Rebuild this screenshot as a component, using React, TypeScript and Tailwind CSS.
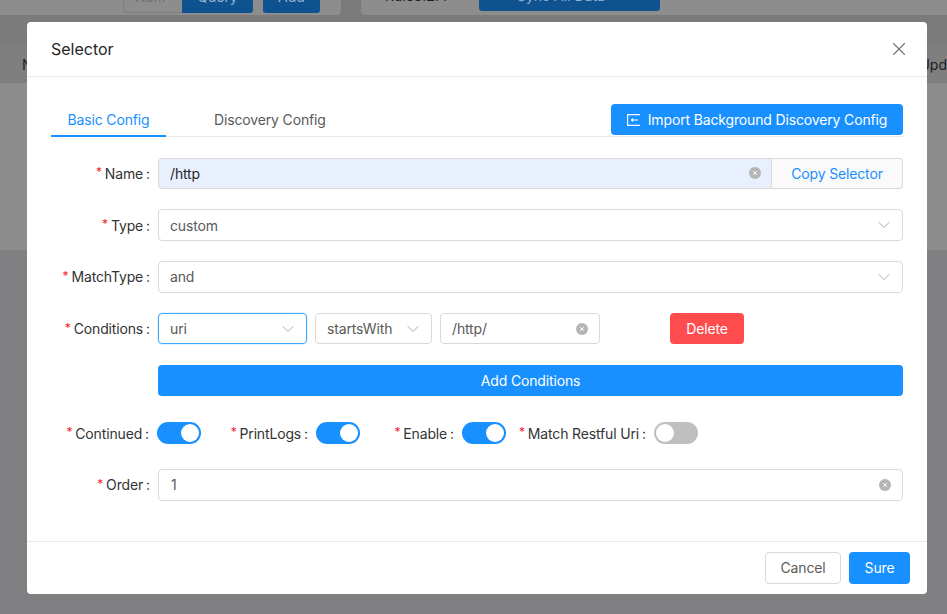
import React from "react";
import { X, ChevronDown } from "lucide-react";

const font = "font-['Inter','Liberation_Sans',sans-serif]";
const text = "text-[14px] tracking-[-0.15px]";

function Label({ text: t, className = "" }: { text: string; className?: string }) {
  return (
    <label className={"flex shrink-0 items-center justify-end whitespace-nowrap text-[14px] tracking-[-0.15px] text-[#333] " + className}>
      <span className="relative -top-[1px] mr-[3px] text-[12px] leading-none text-[#f5222d]">*</span>
      {t}
      <span className="ml-[3px] mr-[8px]">:</span>
    </label>
  );
}

function Clear() {
  return (
    <svg width="12" height="12" viewBox="0 0 12 12" className="shrink-0">
      <circle cx="6" cy="6" r="6" fill="#b5b5b5" />
      <path d="M4.2 4.2l3.6 3.6M7.8 4.2L4.2 7.8" stroke="#fff" strokeWidth="1" />
    </svg>
  );
}

function Select({ value, className = "", focus = false }: { value: string; className?: string; focus?: boolean }) {
  return (
    <div
      className={
        "flex h-[31.6px] items-center justify-between rounded-[4px] border bg-white pl-[11px] pr-[8px] text-[#595959] " +
        text +
        " " +
        (focus ? "border-[#40a9ff] shadow-[0_0_0_1px_rgba(24,144,255,0.12)] " : "border-[#d9d9d9] ") +
        className
      }
    >
      <span>{value}</span>
      <ChevronDown size={20} strokeWidth={1.1} className="text-[#a3a3a3]" />
    </div>
  );
}

function Switch({ on }: { on: boolean }) {
  return (
    <div className={"flex h-[22px] w-[44px] shrink-0 items-center rounded-full px-[2px] " + (on ? "justify-end bg-[#1890ff]" : "justify-start bg-[#bfbfbf]")}>
      <div className="h-[18px] w-[18px] rounded-full bg-white" />
    </div>
  );
}

export default function App() {
  return (
    <div className={"relative h-[614px] w-[947px] overflow-hidden bg-[#808082] " + font}>
      {/* page behind the overlay */}
      <div className="flex h-[15px] bg-[#7a7a7a]">
        <div className="flex w-[341px] items-start rounded-br-[4px] bg-[#8d8d8d] pl-[123px] text-[14px] leading-[20px]">
          <div className="h-[12.5px] w-[59px] overflow-hidden rounded-bl-[3px] border-b border-l border-[#7e7e7e] pl-[11px] text-[#6f6f6f]">
            <div className="-mt-[13px]">Na...</div>
          </div>
          <div className="h-[12.5px] w-[71px] overflow-hidden rounded-br-[3px] bg-[#0f5290] text-center text-[#8fb2d0]">
            <div className="-mt-[13px]">Query</div>
          </div>
          <div className="ml-[10px] h-[12.5px] w-[57px] overflow-hidden rounded-b-[3px] bg-[#0f5290] text-center text-[#8fb2d0]">
            <div className="-mt-[13px]">Add</div>
          </div>
        </div>
        <div className="ml-[20px] flex flex-1 items-start rounded-bl-[4px] bg-[#8d8d8d] pl-[24px] text-[14px] leading-[20px]">
          <div className="h-[12px] w-[94px] overflow-hidden text-[#1c1c1c]">
            <div className="-mt-[14px]">Rule3.2.4</div>
          </div>
          <div className="h-[10.5px] w-[181px] overflow-hidden rounded-b-[3px] bg-[#0f5290] pl-[38px] text-[#8fb2d0]">
            <div className="-mt-[14px]">Sync All Data</div>
          </div>
        </div>
      </div>
      <div className="h-[30px] bg-[#7b7b7c]" />
      <div className="flex h-[38px] items-center justify-between bg-[#7f7f80] px-[22px] text-[14px] text-[#222]">
        <span>N</span>
        <span className="-mr-[22px]">Upd</span>
      </div>
      <div className="h-[167px] bg-[#8d8d8d]" />

      {/* modal */}
      <div className="absolute left-[27px] top-[22px] flex h-[572px] w-[900px] flex-col rounded-[4px] bg-white">
        <div className="flex h-[55px] shrink-0 items-center justify-between border-b border-[#e8e8e8] pl-[24px] pr-[17px]">
          <h2 className="text-[16px] font-normal text-[#262626]">Selector</h2>
          <X size={22} strokeWidth={1.2} className="text-[#737373]" />
        </div>

        <div className="flex flex-1 flex-col px-[24px] pt-[27px]">
          <div className="flex h-[33px] items-start justify-between border-b border-[#e8e8e8]">
            <div className="flex">
              <div className={"h-[33px] w-[115px] border-b-2 border-[#1890ff] text-center leading-[31px] text-[#1890ff] " + text}>
                Basic Config
              </div>
              <div className={"ml-[32px] px-[16px] leading-[31px] text-[#595959] " + text}>Discovery Config</div>
            </div>
            <button className={"flex h-[31px] w-[292px] items-center justify-center gap-[8px] rounded-[4px] bg-[#1890ff] text-white " + text}>
              <svg width="13" height="12" viewBox="0 0 13 12" fill="none" stroke="#fff" strokeWidth="1.2">
                <path d="M13 .6H.6v10.8H13" />
                <path d="M11 6H4.5M6 4.5L4.5 6 6 7.5" />
              </svg>
              Import Background Discovery Config
            </button>
          </div>

          <div className="mt-[20.5px] flex flex-col gap-[20.2px]">
            <div className="flex items-center">
              <Label text="Name" className="w-[107px]" />
              <div className="flex h-[31.6px] flex-1">
                <div className={"flex flex-1 items-center justify-between rounded-l-[4px] border border-[#d9d9d9] bg-[#e8f0fe] pl-[11px] pr-[10px] text-[#262626] " + text}>
                  /http
                  <Clear />
                </div>
                <button className={"w-[131px] rounded-r-[4px] border border-l-0 border-[#d9d9d9] bg-[#fafafa] text-[#1890ff] " + text}>
                  Copy Selector
                </button>
              </div>
            </div>

            <div className="flex items-center">
              <Label text="Type" className="w-[107px]" />
              <Select value="custom" className="flex-1" />
            </div>

            <div className="flex items-center">
              <Label text="MatchType" className="w-[107px]" />
              <Select value="and" className="flex-1" />
            </div>

            <div className="flex items-center">
              <Label text="Conditions" className="w-[107px]" />
              <Select value="uri" focus className="w-[149px]" />
              <Select value="startsWith" className="ml-[8px] w-[117px]" />
              <div className={"ml-[8px] flex h-[31.6px] w-[160px] items-center justify-between rounded-[4px] border border-[#d9d9d9] pl-[11px] pr-[11px] text-[#595959] " + text}>
                /http/
                <Clear />
              </div>
              <button className={"ml-[70px] h-[31.6px] w-[74px] rounded-[4px] bg-[#ff4d4f] text-white " + text}>Delete</button>
            </div>

            <div className="pl-[107px]">
              <button className={"h-[31.6px] w-full rounded-[4px] bg-[#1890ff] text-white " + text}>Add Conditions</button>
            </div>

            <div className="mt-[5.8px] flex h-[22px] items-center">
              <Label text="Continued" className="w-[106px]" />
              <Switch on />
              <Label text="PrintLogs" className="ml-[31px] w-[84px]" />
              <Switch on />
              <Label text="Enable" className="ml-[35px] w-[67px]" />
              <Switch on />
              <Label text="Match Restful Uri" className="ml-[14px] w-[134px]" />
              <Switch on={false} />
            </div>

            <div className="mt-[4.8px] flex items-center">
              <Label text="Order" className="w-[107px]" />
              <div className={"flex h-[31.6px] flex-1 items-center justify-between rounded-[4px] border border-[#d9d9d9] pl-[12px] pr-[11px] text-[#595959] " + text}>
                1
                <Clear />
              </div>
            </div>
          </div>
        </div>

        <div className="flex h-[53px] shrink-0 items-center justify-end gap-[8px] border-t border-[#e8e8e8] pr-[17px]">
          <button className={"h-[31.6px] w-[76px] rounded-[4px] border border-[#d9d9d9] bg-white pb-[1px] text-[#595959] " + text}>Cancel</button>
          <button className={"h-[31.6px] w-[61px] rounded-[4px] bg-[#1890ff] pb-[1px] text-white " + text}>Sure</button>
        </div>
      </div>
    </div>
  );
}
